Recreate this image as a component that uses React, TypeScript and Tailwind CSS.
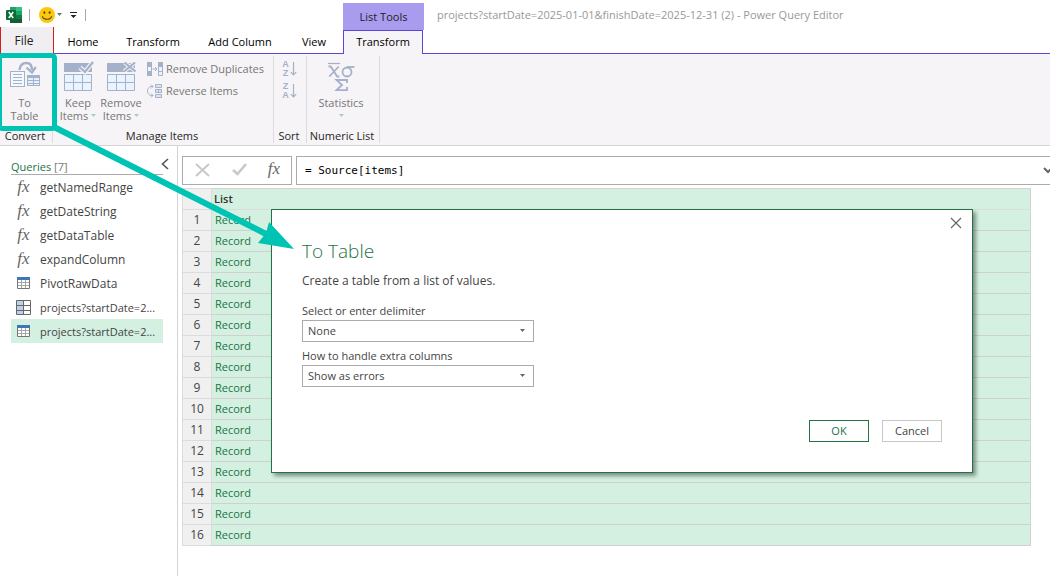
import React from 'react';
import clsx from 'clsx';

const tabs = [
  { label: 'Home', className: 'w-[58px]' },
  { label: 'Transform', className: 'w-[82px]' },
  { label: 'Add Column', className: 'w-[92px]' },
  { label: 'View', className: 'w-[56px]' },
];

const queries = [
  { id: 1, name: 'getNamedRange', kind: 'function' },
  { id: 2, name: 'getDateString', kind: 'function' },
  { id: 3, name: 'getDataTable', kind: 'function' },
  { id: 4, name: 'expandColumn', kind: 'function' },
  { id: 5, name: 'PivotRawData', kind: 'table' },
  { id: 6, name: 'projects?startDate=2...', kind: 'record', long: true },
  { id: 7, name: 'projects?startDate=2...', kind: 'table', long: true, selected: true },
];

const rows = Array.from({ length: 16 }, (_, i) => i + 1);

const ExcelLogo = () => (
  <svg width="16" height="16" viewBox="0 0 16 16">
    <path d="M4 0h6v4H4z" fill="#21a366" />
    <path d="M10 0h6v4h-6z" fill="#33c481" />
    <path d="M4 4h6v4H4z" fill="#107c41" />
    <path d="M10 4h6v4h-6z" fill="#21a366" />
    <path d="M4 8h6v8H4z" fill="#185c37" />
    <path d="M10 8h6v4h-6z" fill="#107c41" />
    <path d="M10 12h6v4h-6z" fill="#185c37" />
    <rect y="3" width="10" height="10" rx="1" fill="#0b6b36" />
    <path d="M2.800 5l4.400 6M7.200 5l-4.400 6" stroke="#fff" strokeWidth="1.600" />
  </svg>
);

const Smiley = () => (
  <svg width="16" height="16" viewBox="0 0 16 16">
    <circle cx="8" cy="8" r="8" fill="#fdc70c" />
    <ellipse cx="5.4" cy="5.6" rx="1" ry="1.4" fill="#5c4a12" />
    <ellipse cx="10.6" cy="5.6" rx="1" ry="1.4" fill="#5c4a12" />
    <path d="M3.300 9.200a4.900 4.200 0 0 0 9.400 0" fill="none" stroke="#5c4a12" strokeWidth="1.100" />
  </svg>
);

const Caret = ({ className }: { className?: string }) => (
  <svg width="5" height="3" viewBox="0 0 5 3" className={className}>
    <path d="M0 0h5L2.500 3z" fill="currentColor" />
  </svg>
);

const ToTableIcon = () => (
  <svg width="32" height="28" viewBox="0 0 32 28" fill="none">
    <path d="M10.500 9C11 4 14 2 17.500 2S23 4 23 9" stroke="#a3b1cb" strokeWidth="2.400" />
    <path d="M17.500 6.500l5.500 5 3.800-5.500" stroke="#a3b1cb" strokeWidth="2.200" />
    <rect x="1.500" y="10.500" width="14" height="15" fill="#f4f9ff" stroke="#a3b1cb" />
    <path d="M4 13.500h9M4 16.500h9M4 19.500h9M4 22.500h9" stroke="#a3b1cb" />
    <rect x="18.500" y="14.500" width="12" height="10" fill="#e6f1ff" stroke="#a3b1cb" />
    <path d="M24.500 17v8M19 19.500h12M19 22.500h12" stroke="#a3b1cb" />
    <path d="M18 14h13v3H18z" fill="#a3b1cb" />
  </svg>
);

const ItemsIcon = ({ remove }: { remove?: boolean }) => (
  <svg width="32" height="30" viewBox="0 0 32 30" fill="none">
    <path d="M2 2h28v9H2z" fill="#a3b1cb" />
    <path d="M2.500 13.500h27v16h-27z" fill="#eaf4ff" stroke="#a3b1cb" />
    <path d="M11.500 13v17M20.500 13v17M2 21.500h28" stroke="#a3b1cb" />
    {remove ? (
      <>
        <path d="M19.500 1.500l11 9M30 1.500l-11 9" stroke="#f6f4f6" strokeWidth="4" />
        <path d="M19.500 1.500l11 9M30 1.500l-11 9" stroke="#a3b1cb" strokeWidth="2.200" />
      </>
    ) : (
      <>
        <path d="M18 6.500l5 4.500L31 1" stroke="#f6f4f6" strokeWidth="4.500" />
        <path d="M18 6.500l5 4.500L31 1" stroke="#a3b1cb" strokeWidth="2.200" />
      </>
    )}
  </svg>
);

const RemoveDuplicatesIcon = () => (
  <svg width="16" height="14" viewBox="0 0 16 14" fill="none">
    <path d="M0 0h5v14H0z" fill="#a3b1cb" />
    <path d="M1 5h3v4H1z" fill="#eaf4ff" />
    <path d="M5.500 7h4M8 5l2 2-2 2" stroke="#a3b1cb" />
    <path d="M11.500.500h4v13h-4z" fill="#eaf4ff" stroke="#a3b1cb" />
    <path d="M11 0h5v5h-5z" fill="#a3b1cb" />
    <path d="M11 9.500h5" stroke="#a3b1cb" />
  </svg>
);

const ReverseItemsIcon = () => (
  <svg width="16" height="14" viewBox="0 0 16 14" fill="none" stroke="#a3b1cb">
    <path d="M6 2.500H3.500C1.500 3.500.500 5 .500 7s1 3.500 3 4.500H6M4 .500l2 2-2 2M4 9.500l2 2-2 2" />
    <path d="M8.500.500h6v3h-6zM8.500 5.500h6v3h-6zM8.500 10.500h6v3h-6zM11.500 5v4" fill="#dbe6f5" />
  </svg>
);

const SortIcon = ({ first, second }: { first: string; second: string }) => (
  <span className="flex items-center gap-px">
    <span className="flex flex-col font-['Liberation_Sans'] text-[9px] font-bold leading-[9px]">
      <span>{first}</span>
      <span>{second}</span>
    </span>
    <svg width="7" height="16" viewBox="0 0 7 16" fill="none" stroke="currentColor">
      <path d="M3.500 1v13M.800 11.200l2.700 2.800 2.700-2.800" strokeWidth="1.200" />
    </svg>
  </span>
);

const StatisticsIcon = () => (
  <svg width="28" height="30" viewBox="0 0 28 30" fill="none" stroke="#a3b1cb" strokeWidth="1.800">
    <path d="M1 1.500h12" strokeWidth="1.200" />
    <path d="M1.500 4.500h2.200l6.500 10h2.200M11.800 4.500l-9.500 10" />
    <circle cx="20" cy="10" r="4.500" />
    <path d="M20 5h7.500" />
    <path d="M20 21v-3H9.500l5.500 5-5.500 5.200H20V25" />
  </svg>
);

const TableIcon = () => (
  <svg width="13" height="12" viewBox="0 0 13 12">
    <path d="M.500.500h12v11H.500z" fill="#fff" stroke="#767676" />
    <path d="M4.500 3v8M8.500 3v8M1 5.500h11M1 8.500h11" stroke="#a6a6a6" />
    <path d="M0 0h13v3H0z" fill="#3b78b5" />
  </svg>
);

const RecordIcon = () => (
  <svg width="15" height="15" viewBox="0 0 15 15">
    <path d="M.500.500h14v14H.500z" fill="#fff" />
    <path d="M1 1h6v13H1z" fill="#bcd0e8" />
    <path d="M.500.500h14v14H.500zM7.500 0v15M0 5.500h15M0 10.500h15" fill="none" stroke="#666" />
  </svg>
);

const Fx = () => (
  <span className="font-['Liberation_Serif'] text-[17px] italic leading-[18px] text-[#666]">fx</span>
);

const RibbonGroup = ({ label, className, children }: { label: string; className: string; children: React.ReactNode }) => (
  <section
    aria-label={label}
    className={clsx('flex shrink-0 flex-col justify-between border-r border-[#dddbdd]', className)}
  >
    <div className="flex">{children}</div>
    <h2 className="whitespace-nowrap pr-[2px] text-center leading-[14px] text-[#262626]">{label}</h2>
  </section>
);

const SelectField = ({ id, label, options }: { id: string; label: string; options: string[] }) => (
  <div className="flex w-[232px] flex-col">
    <label htmlFor={id} className="leading-[18px]">{label}</label>
    <div className="relative">
      <select
        id={id}
        className="block h-[22px] w-full appearance-none border border-[#ababab] bg-white pl-[5px] pt-px text-[#444] outline-none"
      >
        {options.map((option) => (
          <option key={option}>{option}</option>
        ))}
      </select>
      <Caret className="pointer-events-none absolute right-[9px] top-[9px] text-[#666]" />
    </div>
  </div>
);

const Header = () => (
  <header className="flex">
    <div className="flex w-[343px] shrink-0 flex-col">
      <div className="flex h-[27px] items-center pl-[6px] pt-[2px]">
        <ExcelLogo />
        <span className="ml-[7px] h-[12px] w-px bg-[#a6a6a6]" />
        <button type="button" aria-label="Send feedback" className="ml-[9px] flex items-center gap-[2px] text-[#5f7f78]">
          <Smiley />
          <Caret />
        </button>
        <button type="button" aria-label="Customize Quick Access Toolbar" className="ml-[8px]">
          <svg width="7" height="6" viewBox="0 0 7 6">
            <path d="M0 0h7v1H0zM.500 3h6l-3 3z" fill="#222" />
          </svg>
        </button>
        <span className="ml-[8px] h-[12px] w-px bg-[#a6a6a6]" />
      </div>
      <nav className="flex h-[27px]">
        <button type="button" className="w-[54px] border-x border-[#d02020] bg-[#f0eef0] pr-[6px] text-[12px] text-[#222]">
          File
        </button>
        <div className="flex flex-1 border-b border-[#5b45d6] pt-[5px]">
          {tabs.map((tab) => (
            <button key={tab.label} type="button" className={clsx('whitespace-nowrap text-black', tab.className)}>
              {tab.label}
            </button>
          ))}
        </div>
      </nav>
    </div>
    <div className="flex w-[81px] shrink-0 flex-col pt-[3px]">
      <div className="flex h-[27px] items-center justify-center bg-[#a99cee] pt-px text-[#222]">List Tools</div>
      <div className="flex h-[24px]">
        <button type="button" className="flex-1 border-x border-t border-[#5b45d6] bg-[#f6f4f6] text-black">
          Transform
        </button>
        <span className="w-px border-b border-[#5b45d6]" />
      </div>
    </div>
    <div className="flex-1 border-b border-[#5b45d6] pl-[13px] pt-[7px]">
      <h1 className="whitespace-nowrap leading-[16px] text-[#999]">
        projects?startDate=2025-01-01&amp;finishDate=2025-12-31 (2) - Power Query Editor
      </h1>
    </div>
  </header>
);

const Ribbon = () => (
  <div className="flex h-[92px] border-b border-[#d5d3d5] bg-[#f6f4f6] pb-[2px] pt-[2px] text-[#777]">
    <RibbonGroup label="Convert" className="w-[53px]">
      <button type="button" className="flex w-[49px] flex-col items-center pt-[5px] leading-[13px]">
        <ToTableIcon />
        <span className="mt-[7px]">To<br />Table</span>
      </button>
    </RibbonGroup>
    <RibbonGroup label="Manage Items" className="w-[221px]">
      <button type="button" className="flex w-[46px] flex-col items-center pl-[4px] pt-[5px] leading-[13px]">
        <ItemsIcon />
        <span className="mt-[5px]">Keep</span>
        <span className="flex items-center gap-[3px]">Items <Caret className="text-[#a9cdc3]" /></span>
      </button>
      <button type="button" className="flex w-[44px] flex-col items-center pt-[5px] leading-[13px]">
        <ItemsIcon remove />
        <span className="mt-[5px]">Remove</span>
        <span className="flex items-center gap-[3px]">Items <Caret className="text-[#a9cdc3]" /></span>
      </button>
      <div className="flex flex-col gap-[2px] pl-[4px] pt-[3px]">
        <button type="button" className="flex h-[20px] items-center gap-[3px] whitespace-nowrap">
          <RemoveDuplicatesIcon />
          Remove Duplicates
        </button>
        <button type="button" className="flex h-[20px] items-center gap-[3px] whitespace-nowrap">
          <ReverseItemsIcon />
          Reverse Items
        </button>
      </div>
    </RibbonGroup>
    <RibbonGroup label="Sort" className="w-[33px]">
      <div className="flex w-full flex-col items-center gap-[4px] pr-px pt-[4px] text-[#a3b1cb]">
        <button type="button" aria-label="Sort ascending"><SortIcon first="A" second="Z" /></button>
        <button type="button" aria-label="Sort descending"><SortIcon first="Z" second="A" /></button>
      </div>
    </RibbonGroup>
    <RibbonGroup label="Numeric List" className="w-[73px]">
      <button type="button" className="flex w-full flex-col items-center pr-[4px] pt-[6px] leading-[13px]">
        <StatisticsIcon />
        <span className="mt-[4px]">Statistics</span>
        <Caret className="mt-[5px] text-[#a9cdc3]" />
      </button>
    </RibbonGroup>
  </div>
);

const QueriesPane = () => (
  <aside className="w-[178px] shrink-0 border-r border-[#d5d3d5] pl-[11px] pr-[14px]">
    <div className="flex h-[29px] items-end justify-between border-b border-[#ababab]">
      <h2 className="text-[11px] leading-[14px] text-[#217346]">
        Queries <span className="text-[#777]">[7]</span>
      </h2>
      <button type="button" aria-label="Collapse pane" className="-mr-[6px] mb-[4px]">
        <svg width="8" height="12" viewBox="0 0 8 12" fill="none" stroke="#555" strokeWidth="1.600">
          <path d="M7 1L1.500 6 7 11" />
        </svg>
      </button>
    </div>
    <ul>
      {queries.map((query) => (
        <li key={query.id} className={clsx('flex h-[24px] items-center', query.selected && 'bg-[#d3f0e0]')}>
          <span className="flex w-[25px] shrink-0 justify-center">
            {query.kind === 'function' && <Fx />}
            {query.kind === 'table' && <TableIcon />}
            {query.kind === 'record' && <RecordIcon />}
          </span>
          <span className={clsx('ml-[4px] whitespace-nowrap pt-[2px] text-[#444]', query.long ? 'text-[11px]' : 'text-[12px]')}>
            {query.name}
          </span>
        </li>
      ))}
    </ul>
  </aside>
);

const FormulaBar = () => (
  <div className="flex h-[29px] gap-[4px]">
    <div className="flex w-[110px] shrink-0 items-center justify-between border border-[#ababab] px-[11px] pb-[2px]">
      <button type="button" aria-label="Cancel formula">
        <svg width="17" height="14" viewBox="0 0 17 14" fill="none" stroke="#c8c8c8" strokeWidth="2">
          <path d="M2 1l13 12M15 1L2 13" />
        </svg>
      </button>
      <button type="button" aria-label="Apply formula">
        <svg width="15" height="13" viewBox="0 0 15 13" fill="none" stroke="#c8c8c8" strokeWidth="2.600">
          <path d="M1 7l4.500 4L14 1" />
        </svg>
      </button>
      <button type="button" aria-label="Add step"><Fx /></button>
    </div>
    <div className="flex min-w-0 flex-1 items-center border-y border-l border-[#ababab]">
      <input
        aria-label="Formula"
        defaultValue="= Source[items]"
        className="min-w-0 flex-1 bg-transparent pl-[8px] pt-px font-['DejaVu_Sans_Mono',monospace] text-[11px] text-black outline-none"
      />
      <button type="button" aria-label="Expand formula bar" className="-mr-[3px]">
        <svg width="10" height="7" viewBox="0 0 10 7" fill="none" stroke="#666" strokeWidth="2">
          <path d="M1 1l4 4 4-4" />
        </svg>
      </button>
    </div>
  </div>
);

const DataGrid = () => (
  <div className="mt-[3px] pr-[19px]">
    <table className="w-full table-fixed border-collapse border border-[#d3d3d3]">
      <thead>
        <tr className="h-[21px]">
          <th aria-label="Row" className="w-[29px] border border-[#dcdcdc] bg-[#f0f0f0]" />
          <th className="border-b border-[#dcdcdc] bg-[#d3f0e0] pl-[2px] text-left font-semibold leading-[16px] text-[#333]">List</th>
        </tr>
      </thead>
      <tbody>
        {rows.map((row) => (
          <tr key={row} className="h-[21px]">
            <th className="border border-[#dcdcdc] bg-[#f0f0f0] text-center text-[12px] font-normal leading-[16px] text-[#444]">{row}</th>
            <td className="border-b border-[#d0d0d0] bg-[#d3f0e0] pl-[3px] leading-[16px]">
              <a href="#record" className="text-[#217346]">Record</a>
            </td>
          </tr>
        ))}
      </tbody>
    </table>
  </div>
);

const ToTableDialog = () => (
  <div
    role="dialog"
    aria-labelledby="dialog-title"
    className="absolute left-[271px] top-[209px] w-[702px] border border-[#217346] bg-white pb-[30px] pl-[30px] pr-[30px] pt-[27px] text-[#444] shadow-[3px_3px_4px_rgba(0,0,0,0.4)]"
  >
    <button type="button" aria-label="Close" className="absolute right-[10px] top-[7px]">
      <svg width="12" height="12" viewBox="0 0 12 12" fill="none" stroke="#666" strokeWidth="1.200">
        <path d="M1 1l10 10M11 1L1 11" />
      </svg>
    </button>
    <h2 id="dialog-title" className="text-[19px] font-light leading-[28px] text-[#217346]">To Table</h2>
    <p className="mt-[7px] text-[12px] leading-[18px]">Create a table from a list of values.</p>
    <div className="mt-[12px] flex flex-col gap-[5px]">
      <SelectField id="delimiter" label="Select or enter delimiter" options={['None', 'Comma', 'Semicolon', 'Tab']} />
      <SelectField id="extra" label="How to handle extra columns" options={['Show as errors', 'Show as list', 'Ignore']} />
    </div>
    <div className="mt-[33px] flex justify-end gap-[13px]">
      <button type="button" className="h-[22px] w-[60px] border border-[#217346] text-[#217346]">OK</button>
      <button type="button" className="h-[22px] w-[60px] border border-[#c6c6c6]">Cancel</button>
    </div>
  </div>
);

// Teal box around the To Table command with an arrow to the dialog title
const Callout = () => (
  <div aria-hidden="true" className="pointer-events-none absolute left-0 top-[53px]">
    <div className="-ml-[3px] h-[78px] w-[60px] rounded-[5px] border-5 border-[#00c4b3]" />
    <svg width="300" height="200" viewBox="0 0 300 200" className="absolute left-0 top-0">
      <path d="M54 74l216 109" stroke="#00c4b3" strokeWidth="6" />
      <path d="M294 196l-25-27-3 11-8 10z" fill="#00c4b3" />
    </svg>
  </div>
);

export default function App() {
  return (
    <div className="relative flex min-h-screen flex-col overflow-hidden bg-white font-['Open_Sans',sans-serif] text-[11px]">
      <Header />
      <Ribbon />
      <div className="flex flex-1">
        <QueriesPane />
        <main className="min-w-0 flex-1 pl-[4px] pt-[10px]">
          <FormulaBar />
          <DataGrid />
        </main>
      </div>
      <ToTableDialog />
      <Callout />
    </div>
  );
}
